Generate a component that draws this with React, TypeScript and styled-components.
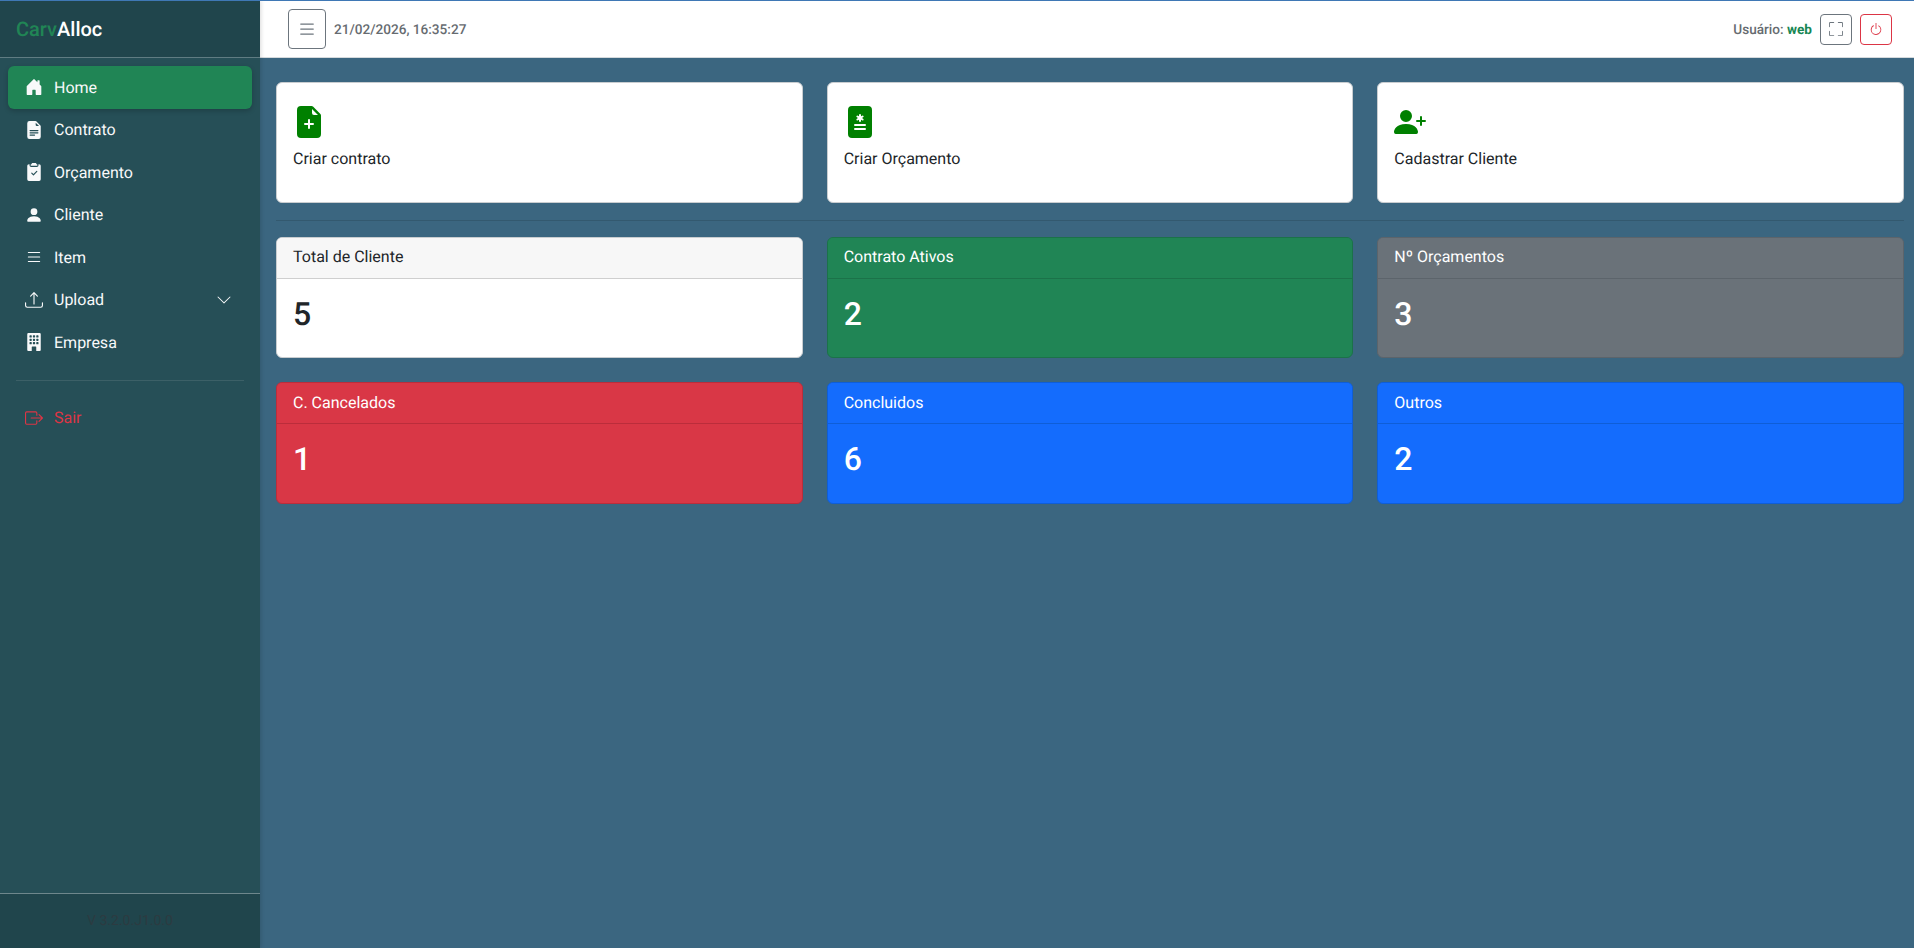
import React from 'react';
import styled, { createGlobalStyle } from 'styled-components';
import {
  BsHouseDoorFill,
  BsFileEarmarkTextFill,
  BsClipboard2CheckFill,
  BsPersonFill,
  BsList,
  BsUpload,
  BsChevronDown,
  BsBuildingFill,
  BsBoxArrowRight,
  BsFullscreen,
  BsPower,
  BsFileEarmarkPlusFill,
  BsFileMedicalFill,
  BsPersonPlusFill,
} from 'react-icons/bs';

const GlobalStyle = createGlobalStyle`
  html, body {
    margin: 0;
    padding: 0;
    height: 100%;
  }
  body {
    font-family: Roboto, "Liberation Sans", sans-serif;
    font-size: 16px;
    color: #212529;
    background: #3b6680;
    text-rendering: geometricPrecision;
  }
  * {
    box-sizing: border-box;
  }
`;

const variants: any = {
  light: { bg: '#ffffff', head: '#f7f7f7', line: '#cfcfcf', border: '#c9cdd0', color: '#212529' },
  success: { bg: '#208555', head: '#208555', line: '#1b7249', border: '#1b7249', color: '#ffffff' },
  secondary: { bg: '#6a7279', head: '#6a7279', line: '#5c646b', border: '#5c646b', color: '#ffffff' },
  danger: { bg: '#d93746', head: '#d93746', line: '#bb2d3b', border: '#bb2d3b', color: '#ffffff' },
  primary: { bg: '#146cfd', head: '#146cfd', line: '#0f5ed7', border: '#0f5ed7', color: '#ffffff' },
};

const menu = [
  { label: 'Home', icon: <BsHouseDoorFill />, active: true },
  { label: 'Contrato', icon: <BsFileEarmarkTextFill /> },
  { label: 'Orçamento', icon: <BsClipboard2CheckFill /> },
  { label: 'Cliente', icon: <BsPersonFill /> },
  { label: 'Item', icon: <BsList /> },
  { label: 'Upload', icon: <BsUpload />, arrow: true },
  { label: 'Empresa', icon: <BsBuildingFill /> },
];

const actions = [
  { label: 'Criar contrato', icon: <BsFileEarmarkPlusFill /> },
  { label: 'Criar Orçamento', icon: <BsFileMedicalFill /> },
  { label: 'Cadastrar Cliente', icon: <BsPersonPlusFill /> },
];

const stats = [
  { title: 'Total de Cliente', value: 5, variant: 'light' },
  { title: 'Contrato Ativos', value: 2, variant: 'success' },
  { title: 'Nº Orçamentos', value: 3, variant: 'secondary' },
  { title: 'C. Cancelados', value: 1, variant: 'danger' },
  { title: 'Concluidos', value: 6, variant: 'primary' },
  { title: 'Outros', value: 2, variant: 'primary' },
];

const App = () => {
  return (
    <Layout>
      <GlobalStyle />
      <Sidebar>
        <Brand>
          <span>Carv</span>Alloc
        </Brand>
        <Nav>
          {menu.map((item) => (
            <NavItem key={item.label} $active={item.active}>
              <NavIcon>{item.icon}</NavIcon>
              {item.label}
              {item.arrow && (
                <Arrow>
                  <BsChevronDown />
                </Arrow>
              )}
            </NavItem>
          ))}
          <NavDivider />
          <NavItem $danger>
            <NavIcon>
              <BsBoxArrowRight />
            </NavIcon>
            Sair
          </NavItem>
        </Nav>
        <Version>V 3.2.0.J1.0.0</Version>
      </Sidebar>
      <Main>
        <Topbar>
          <TopLeft>
            <IconButton $w={38} $h={40} $tone="#6c757d" $size={20}>
              <BsList />
            </IconButton>
            <DateText>21/02/2026, 16:35:27</DateText>
          </TopLeft>
          <TopRight>
            <UserText>
              Usuário: <b>web</b>
            </UserText>
            <IconButton $w={32} $h={31} $tone="#6c757d" $size={14}>
              <BsFullscreen />
            </IconButton>
            <IconButton $w={32} $h={31} $tone="#dc3545" $size={14}>
              <BsPower />
            </IconButton>
          </TopRight>
        </Topbar>
        <Content>
          <CardGrid>
            {actions.map((action) => (
              <ActionCard key={action.label}>
                <ActionIcon>{action.icon}</ActionIcon>
                <ActionLabel>{action.label}</ActionLabel>
              </ActionCard>
            ))}
          </CardGrid>
          <Rule />
          <StatGrid>
            {stats.map((stat) => (
              <StatCard key={stat.title} $variant={stat.variant}>
                <StatHeader $variant={stat.variant}>{stat.title}</StatHeader>
                <StatValue>{stat.value}</StatValue>
              </StatCard>
            ))}
          </StatGrid>
        </Content>
      </Main>
    </Layout>
  );
};

export default App;

// Styled Components
const Layout = styled.div`
  display: flex;
  height: 948px;
  overflow: hidden;
  border-top: 1px solid #3f78b5;
`;

const Sidebar = styled.aside`
  width: 260px;
  flex-shrink: 0;
  display: flex;
  flex-direction: column;
  background: #264f57;
  box-shadow: 1px 0 4px rgba(0, 0, 0, 0.15);
  position: relative;
  z-index: 2;
`;

const Brand = styled.div`
  height: 57px;
  flex-shrink: 0;
  display: flex;
  align-items: center;
  padding: 0 16px;
  background: #20454c;
  border-bottom: 1px solid #5f7c82;
  color: #ffffff;
  font-size: 20px;
  font-weight: 500;

  span {
    color: #208555;
  }
`;

const Nav = styled.nav`
  flex: 1;
  padding: 8px 8px 0;
`;

const NavItem = styled.div<{ $active?: boolean; $danger?: boolean }>`
  height: 42.5px;
  display: flex;
  align-items: center;
  padding: 0 16px;
  border-radius: 6px;
  font-size: 16px;
  color: ${(props) => (props.$danger ? '#dc3545' : '#f8f9fa')};
  background: ${(props) => (props.$active ? '#208555' : 'transparent')};
  box-shadow: ${(props) => (props.$active ? '0 2px 5px rgba(0, 0, 0, 0.2)' : 'none')};
`;

const NavIcon = styled.span`
  width: 20px;
  display: flex;
  justify-content: center;
  margin-right: 10px;
  font-size: 18px;
`;

const Arrow = styled.span`
  margin-left: auto;
  display: flex;
  font-size: 16px;
  padding-right: 4px;
`;

const NavDivider = styled.div`
  height: 1px;
  margin: 16px 8px 16px;
  background: #3c6067;
`;

const Version = styled.div`
  height: 55px;
  flex-shrink: 0;
  display: flex;
  align-items: center;
  justify-content: center;
  background: #20454c;
  border-top: 1px solid #6e878c;
  color: #2c3b41;
  font-size: 14px;
`;

const Main = styled.div`
  flex: 1;
  display: flex;
  flex-direction: column;
  min-width: 0;
`;

const Topbar = styled.header`
  height: 57px;
  flex-shrink: 0;
  display: flex;
  align-items: center;
  justify-content: space-between;
  padding: 0 22px 0 28px;
  background: #ffffff;
  border-bottom: 1px solid #d5dadd;
`;

const TopLeft = styled.div`
  display: flex;
  align-items: center;
  gap: 8px;
`;

const TopRight = styled.div`
  display: flex;
  align-items: center;
  gap: 8px;
`;

const IconButton = styled.button<{ $w: number; $h: number; $tone: string; $size: number }>`
  width: ${(props) => props.$w}px;
  height: ${(props) => props.$h}px;
  padding: 0;
  display: flex;
  align-items: center;
  justify-content: center;
  background: transparent;
  border: 1px solid ${(props) => props.$tone};
  border-radius: 4px;
  color: ${(props) => props.$tone};
  font-size: ${(props) => props.$size}px;
`;

const DateText = styled.span`
  padding-top: 1px;
  font-size: 13.6px;
  font-weight: 500;
  color: #666b70;
`;

const UserText = styled.span`
  padding-top: 1px;
  font-size: 13.6px;
  font-weight: 500;
  color: #666b70;

  b {
    color: #198754;
    font-weight: 700;
  }
`;

const Content = styled.main`
  flex: 1;
  padding: 24px 10px 0 16px;
  background: #3b6680;
`;

const CardGrid = styled.div`
  display: grid;
  grid-template-columns: repeat(3, 1fr);
  gap: 24px;
`;

const ActionCard = styled.div`
  height: 121.4px;
  padding: 23px 16px;
  background: #ffffff;
  border: 1px solid #c9cdd0;
  border-radius: 6px;
`;

const ActionIcon = styled.div`
  display: flex;
  height: 32px;
  margin-bottom: 9px;
  font-size: 32px;
  color: #008000;
`;

const ActionLabel = styled.div`
  font-size: 16px;
  line-height: 24px;
  color: #212529;
`;

const Rule = styled.div`
  height: 1px;
  margin: 16.3px 0;
  background: #33596f;
`;

const StatGrid = styled.div`
  display: grid;
  grid-template-columns: repeat(3, 1fr);
  gap: 24px;
`;

const StatCard = styled.div<{ $variant: string }>`
  height: 121.4px;
  background: ${(props) => variants[props.$variant].bg};
  border: 1px solid ${(props) => variants[props.$variant].border};
  border-radius: 6px;
  color: ${(props) => variants[props.$variant].color};
  overflow: hidden;
`;

const StatHeader = styled.div<{ $variant: string }>`
  height: 41px;
  display: flex;
  align-items: center;
  padding: 0 16px 2px;
  background: ${(props) => variants[props.$variant].head};
  border-bottom: 1px solid ${(props) => variants[props.$variant].line};
  font-size: 16px;
`;

const StatValue = styled.div`
  padding: 16px;
  font-size: 32px;
  font-weight: 500;
  line-height: 38px;
`;
